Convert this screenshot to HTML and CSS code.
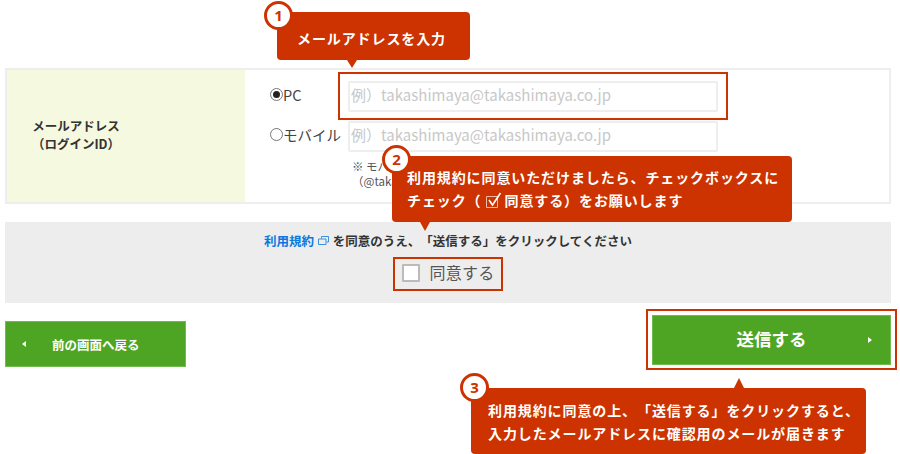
FILE: index.html
```html
<!DOCTYPE html>
<html lang="ja">
<head>
  <meta charset="utf-8">
  <title>メールアドレスを入力</title>
  <link rel="stylesheet" href="styles.css">
</head>
<body>
  <div class="page">
    <div class="form-table">
      <div class="form-label">メールアドレス<br>（ログインID）</div>
      <div class="form-body">
        <div class="mail-row">
          <span class="mail-type"><span class="radio radio-on"></span>PC</span>
          <div class="mail-input">例）takashimaya@takashimaya.co.jp</div>
        </div>
        <div class="mail-row">
          <span class="mail-type"><span class="radio"></span>モバイル</span>
          <div class="mail-input">例）takashimaya@takashimaya.co.jp</div>
        </div>
        <p class="mail-note">※ モバ<br>（@taka</p>
      </div>
    </div>

    <div class="agree">
      <p class="agree-text">
        <a class="agree-link" href="#">利用規約</a>
        <svg class="window-icon" width="11" height="10" viewBox="0 0 11 10">
          <path d="M3.500 2.500V.5h7v5.500h-2M.5 3h7.500v5.500H.5z" fill="none" stroke="#3b8fe0"/>
        </svg>
        を同意のうえ、「送信する」をクリックしてください
      </p>
      <div class="agree-check">
        <span class="checkbox"></span>
        <span>同意する</span>
      </div>
    </div>

    <div class="buttons">
      <a class="btn btn-back" href="#">
        <span class="arrow arrow-left"></span>
        前の画面へ戻る
      </a>
      <a class="btn btn-send" href="#">
        送信する
        <span class="arrow arrow-right"></span>
      </a>
    </div>

    <!-- annotations over the form -->
    <div class="frame frame-input"></div>
    <div class="frame frame-check"></div>
    <div class="frame frame-send"></div>

    <div class="note note-1">
      <span class="badge">1</span>
      メールアドレスを入力
    </div>
    <div class="note note-2">
      <span class="badge">2</span>
      利用規約に同意いただけましたら、チェックボックスに<br>
      チェック（<svg class="check-icon" width="20" height="16" viewBox="0 0 20 16">
        <path d="M4.500 4.500h11v11h-11z" fill="none" stroke="#f0b8a0"/>
        <path d="M7 8l3.500 5L18.500 1" fill="none" stroke="#fff" stroke-width="1.600"/>
      </svg>同意する）をお願いします
    </div>
    <div class="note note-3">
      <span class="badge">3</span>
      利用規約に同意の上、「送信する」をクリックすると、<br>
      入力したメールアドレスに確認用のメールが届きます
    </div>
  </div>
</body>
</html>
```

FILE: styles.css
```css
* {
  box-sizing: border-box;
}

body {
  margin: 0;
  background-color: #fff;
  color: #333;
  font-family: "Noto Sans CJK JP", "Open Sans", sans-serif;
  text-spacing-trim: space-all;
}

.page {
  position: relative;
  width: 900px;
  height: 454px;
  overflow: hidden;
  padding: 68px 9px 0 5px;
}

.form-table {
  display: flex;
  height: 136px;
  border: 2px solid #eee;
}

.form-label {
  width: 238px;
  padding: 0 100px 3px 0;
  background-color: #f5f9e0;
  display: flex;
  align-items: center;
  justify-content: center;
  text-align: center;
  white-space: nowrap;
  font-size: 12.500px;
  font-weight: 700;
  line-height: 18px;
}

.form-body {
  flex: 1;
  padding: 10px 0 0 25px;
}

.mail-row {
  display: flex;
  align-items: center;
  height: 32px;
  margin-bottom: 8px;
}

.mail-type {
  display: flex;
  align-items: center;
  width: 78px;
  padding-bottom: 3px;
  font-size: 14.500px;
  color: #444;
}

.radio {
  position: relative;
  width: 13px;
  height: 13px;
  border: 1px solid #777;
  border-radius: 50%;
}

.radio-on::after {
  content: "";
  position: absolute;
  left: 2px;
  top: 2px;
  width: 7px;
  height: 7px;
  background-color: #222;
  border-radius: 50%;
}

.mail-input {
  width: 370px;
  height: 31px;
  padding-left: 1px;
  border: 2px solid #eee;
  border-radius: 2px;
  color: #c8c8c8;
  font-size: 15px;
  line-height: 24px;
  white-space: nowrap;
}

.mail-note {
  margin: -1px 0 0 82px;
  font-size: 11.500px;
  line-height: 15px;
  color: #555;
}

.agree {
  height: 81px;
  margin-top: 18px;
  padding-top: 10px;
  background-color: #ededed;
  text-align: center;
}

.agree-text {
  margin: 0;
  font-size: 12.500px;
  font-weight: 700;
  line-height: 18px;
}

.agree-link {
  color: #0a78e0;
  text-decoration: none;
}

.window-icon {
  margin: 0 1px;
}

.agree-check {
  display: flex;
  align-items: center;
  justify-content: center;
  gap: 10px;
  margin-top: 10px;
  font-size: 16px;
  line-height: 24px;
  letter-spacing: 0.200px;
  color: #555;
}

.checkbox {
  width: 18px;
  height: 18px;
  margin-top: 2px;
  background-color: #fff;
  border: 2px solid #bbb;
  border-radius: 1px;
}

.buttons {
  display: flex;
  justify-content: space-between;
  align-items: flex-start;
  margin-top: 12px;
}

.btn {
  display: flex;
  align-items: center;
  color: #fff;
  font-weight: 700;
  text-decoration: none;
  background-color: #4ea524;
  border: 1px solid #6fbb4d;
}

.btn-back {
  width: 181px;
  height: 46px;
  margin-top: 6px;
  padding-left: 16px;
  gap: 26px;
  font-size: 12.500px;
}

.btn-send {
  position: relative;
  justify-content: center;
  width: 239px;
  height: 50px;
  padding-bottom: 3px;
  font-size: 17.500px;
}

.arrow {
  width: 0;
  height: 0;
  border-top: 3.500px solid transparent;
  border-bottom: 3.500px solid transparent;
}

.arrow-left {
  border-right: 4px solid #fff;
}

.arrow-right {
  position: absolute;
  right: 18px;
  top: 21px;
  border-left: 4px solid #fff;
}

.frame {
  position: absolute;
  border: 2px solid #cc3300;
}

.frame-input {
  left: 338px;
  top: 72px;
  width: 390px;
  height: 48px;
}

.frame-check {
  left: 393px;
  top: 257px;
  width: 110px;
  height: 34px;
}

.frame-send {
  left: 646px;
  top: 309px;
  width: 251px;
  height: 61px;
}

.note {
  position: absolute;
  background-color: #cc3300;
  border-radius: 4px;
  color: #fff;
  font-size: 14px;
  font-weight: 700;
  line-height: 22.500px;
  letter-spacing: 0.900px;
  white-space: nowrap;
}

.note::after {
  content: "";
  position: absolute;
  width: 0;
  height: 0;
  border-left: 5px solid transparent;
  border-right: 5px solid transparent;
}

.note-1 {
  left: 277px;
  top: 12px;
  width: 193px;
  height: 48px;
  padding: 15px 0 0 20px;
}

.note-1::after {
  left: 70px;
  top: 48px;
  border-top: 8px solid #cc3300;
}

.note-1 .badge {
  left: -13px;
  top: -11px;
}

.note-2 {
  left: 392px;
  top: 156px;
  width: 400px;
  height: 66px;
  padding: 10px 0 0 15px;
}

.note-2::after {
  left: 28px;
  top: 66px;
  border-top: 9px solid #cc3300;
}

.note-2 .badge {
  left: -10px;
  top: -11px;
}

.note-3 {
  left: 471px;
  top: 388px;
  width: 395px;
  height: 66px;
  padding: 11px 0 0 17px;
}

.note-3::after {
  left: 263px;
  top: -10px;
  border-bottom: 10px solid #cc3300;
}

.note-3 .badge {
  left: -11px;
  top: -15px;
}

.badge {
  position: absolute;
  width: 29px;
  height: 29px;
  background-color: #fff;
  border: 3px solid #cc3300;
  border-radius: 50%;
  color: #cc3300;
  font-family: "Open Sans", sans-serif;
  font-size: 15px;
  line-height: 23px;
  text-align: center;
  letter-spacing: 0;
}

.check-icon {
  vertical-align: -2px;
  margin-right: 3px;
}
```
